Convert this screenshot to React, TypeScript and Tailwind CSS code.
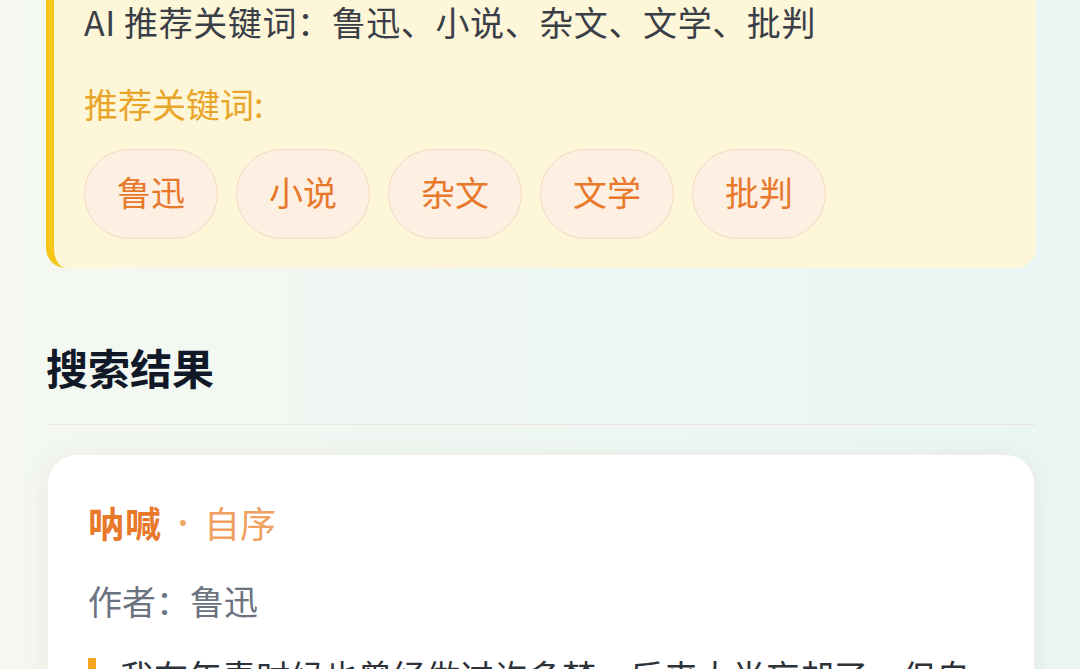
import React from "react";

const font = { fontFamily: '"Noto Sans CJK SC", "Noto Sans", sans-serif' };

export default function App() {
  const chips = ["鲁迅", "小说", "杂文", "文学", "批判"];
  return (
    <div
      className="w-[1080px] h-[669px] overflow-hidden bg-gradient-to-r from-[#f4f8f1] via-[#eff7f3] to-[#e9f6f4]"
      style={font}
    >
      <div className="pl-[46px] pr-[44px]">
        <div className="-mt-[30px] rounded-[20px] bg-[#fef6d8] border-l-[8px] border-[#f5c518] pl-[30px] pr-[30px] pt-[30px] pb-[29px]">
          <div className="text-[34px] leading-[44px] tracking-[0.6px] text-[#3a3f47]">
            AI 推荐关键词：鲁迅、小说、杂文、文学、批判
          </div>
          <div className="mt-[38px] text-[34px] leading-[44px] text-[#e9a52a]">推荐关键词:</div>
          <div className="mt-[23px] flex gap-[18px]">
            {chips.map((c) => (
              <div
                key={c}
                className="h-[90px] w-[134px] pb-[6px] flex items-center justify-center rounded-full bg-[#feefe3] border border-[#f5d8c2] text-[34px] text-[#e8782a]"
              >
                {c}
              </div>
            ))}
          </div>
        </div>

        <div className="mt-[73px] text-[42px] leading-[52px] font-bold text-[#111827]">搜索结果</div>
        <div className="mt-[31px] h-px bg-[#ebe5db]" />

        <div className="mt-[29px] ml-px mr-px rounded-[30px] bg-white shadow-[0_4px_24px_rgba(200,190,170,0.25)] border border-[#f5f1ea] pl-[40px] pr-[40px] pt-[43px] pb-[40px]">
          <div className="flex items-center text-[36px] leading-[48px]">
            <span className="font-bold text-[#e8782a] tracking-[1px]">呐喊</span>
            <span className="mx-[7px] text-[#f0a868] text-[28px]">·</span>
            <span className="text-[#f0a060]">自序</span>
          </div>
          <div className="mt-[31px] text-[34px] leading-[48px] text-[#6b7280]">作者：鲁迅</div>
          <div className="mt-[33px] border-l-[8px] border-[#f5a623] pl-[24px] text-[34px] leading-[36px] text-[#2d3138]">
            我在年青时候也曾经做过许多梦，后来大半忘却了，但自己也并不以为可惜。
          </div>
        </div>
      </div>
    </div>
  );
}
